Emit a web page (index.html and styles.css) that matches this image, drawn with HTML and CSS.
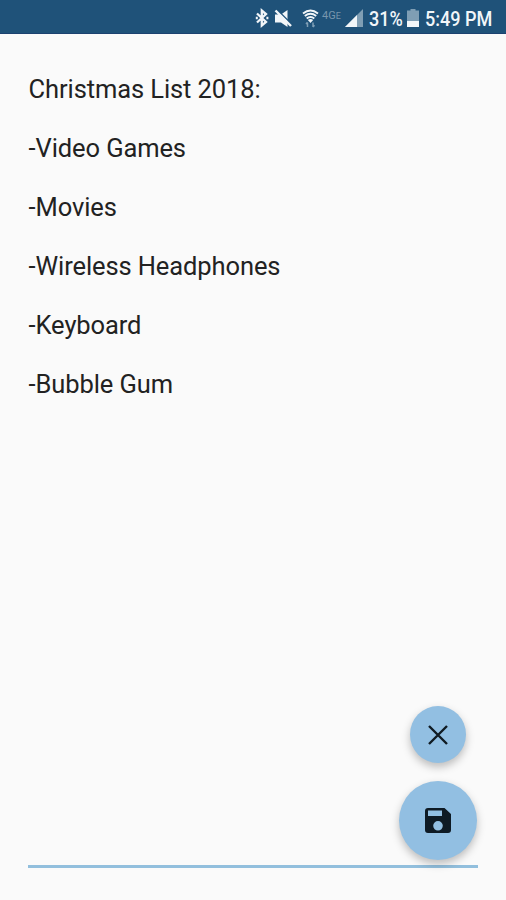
FILE: index.html
```
<!DOCTYPE html>
<html lang="en">
  <head>
    <meta charset="UTF-8" />
    <meta name="viewport" content="width=device-width, initial-scale=1.0" />
    <title>Note</title>
    <link rel="stylesheet" href="styles.css">
  </head>
  <body>
    <header class="statusbar">
      <svg class="bluetooth" width="14" height="20" viewBox="0 0 14 20">
        <path d="M2 5.5 L11 14 L6.8 17.5 V2.5 L11 6 L2 14.5" />
        <path class="dots" d="M0.8 10 h2 M11.4 10 h2" />
      </svg>
      <svg class="mute" width="19" height="19" viewBox="0 0 19 19">
        <path d="M1 5.5 H7 L13.5 1 V18 L7 13.5 H1 Z" />
        <path class="gap" d="M3.5 1 L18.5 16" />
        <path class="slash" d="M1.5 1.5 L17 17" />
      </svg>
      <svg class="wifi" width="17" height="19" viewBox="0 0 17 19">
        <path d="M1 4.5 Q8.5 -1.5 16 4.5" />
        <path d="M2.8 7 Q8.5 2.5 14.2 7" />
        <path d="M4.7 9.5 Q8.5 6.5 12.3 9.5" />
        <path class="fill" d="M5.8 11 Q8.5 9 11.2 11 L8.5 14 Z" />
        <path class="arrows" d="M5.5 18 V13.5 M4 15 L5.5 13.3 M11 13.5 V18 M12.5 16.3 L11 18" />
      </svg>
      <span class="network">4G<small>E</small></span>
      <svg class="signal" width="18" height="18" viewBox="0 0 18 18">
        <path class="dim" d="M0 18 L18 0 V18 Z" />
        <path d="M0 18 L12 6 V18 Z" />
      </svg>
      <span class="percent">31%</span>
      <svg class="battery" width="12" height="18" viewBox="0 0 12 18">
        <path class="dim" d="M3.5 0 H8.5 V1.5 H12 V18 H0 V1.5 H3.5 Z" />
        <path d="M0 12 H12 V18 H0 Z" />
      </svg>
      <span class="clock">5:49 PM</span>
    </header>
    <main>
      <div class="note">
        <p>Christmas List 2018:</p>
        <p>-Video Games</p>
        <p>-Movies</p>
        <p>-Wireless Headphones</p>
        <p>-Keyboard</p>
        <p>-Bubble Gum</p>
      </div>
      <div class="actions">
        <button class="fab small" aria-label="Close">
          <svg width="20" height="20" viewBox="0 0 20 20">
            <path class="cross" d="M1 1 L19 19 M19 1 L1 19" />
          </svg>
        </button>
        <button class="fab" aria-label="Save">
          <svg width="26" height="25" viewBox="0 0 26 25">
            <path fill-rule="evenodd" d="M3 0 H19.5 L26 6 V22 Q26 25 23 25 H3 Q0 25 0 22 V3 Q0 0 3 0 Z M3 2.500 V8 H17 V2.500 Z M13 13 A4.800 4.800 0 1 0 13 22.600 A4.800 4.800 0 1 0 13 13 Z" />
          </svg>
        </button>
      </div>
    </main>
  </body>
</html>
```

FILE: styles.css
```
* {
  box-sizing: border-box;
}
body {
  margin: 0;
  height: 900px;
  display: flex;
  flex-direction: column;
  background-color: #fafafa;
  font-family: Roboto, sans-serif;
}
.statusbar {
  display: flex;
  align-items: center;
  height: 34px;
  padding: 3px 0 0 255px;
  background-color: #1f5279;
  border-bottom: 1px solid #1c4270;
  color: #f2f6f9;
  font-size: 21px;
  white-space: nowrap;
  overflow: hidden;
}
.statusbar svg {
  flex: none;
  fill: #f2f6f9;
}
.bluetooth path {
  fill: none;
  stroke: #f2f6f9;
  stroke-width: 2.3;
}
.mute {
  margin-left: 5px;
}
.mute .gap {
  stroke: #1f5279;
  stroke-width: 1.5;
}
.mute .slash {
  stroke: #f2f6f9;
  stroke-width: 2.4;
}
.wifi {
  margin-left: 9px;
}
.wifi path {
  fill: none;
  stroke: #f2f6f9;
  stroke-width: 1.9;
}
.wifi .fill {
  fill: #f2f6f9;
  stroke: none;
}
.wifi .arrows {
  stroke: #7f9eb5;
  stroke-width: 1.5;
}
.network {
  flex: none;
  width: 20px;
  margin: -6px 0 0 3px;
  color: #7896ad;
  font-size: 11px;
}
.network small {
  font-size: 9px;
}
.signal {
  margin-left: 3px;
}
.statusbar .dim {
  fill: #7f9eb4;
}
.percent,
.clock {
  flex: none;
  margin-top: 1px;
  font-weight: 500;
  transform: scaleX(0.86);
  transform-origin: left;
}
.percent {
  width: 34px;
  margin-left: 6px;
}
.battery {
  margin-left: 4px;
}
.clock {
  margin-left: 6px;
}
main {
  position: relative;
  flex: 1;
  padding: 41px 28px 32px;
}
.note {
  height: 100%;
  border-bottom: 3px solid #92bfdd;
  color: #222;
  font-size: 25.5px;
  letter-spacing: -0.1px;
  line-height: 29.55px;
}
.note p {
  margin: 0 0 29.55px 0.6px;
}
.actions {
  position: absolute;
  right: 29px;
  bottom: 40px;
  display: flex;
  flex-direction: column;
  align-items: center;
  gap: 18px;
}
.fab {
  display: flex;
  align-items: center;
  justify-content: center;
  width: 78px;
  height: 79px;
  padding: 0;
  border: none;
  border-radius: 50%;
  background-color: #92bfe2;
  box-shadow: 0 4px 8px rgba(0, 0, 0, 0.25);
  fill: #0e1a24;
}
.fab.small {
  width: 56px;
  height: 57px;
}
.cross {
  stroke: #101a22;
  stroke-width: 2.4;
}
```
